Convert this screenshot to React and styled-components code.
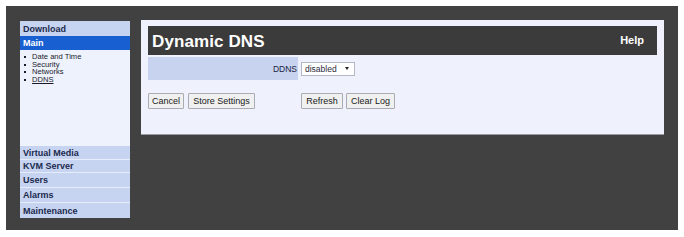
import React from "react";
import styled, { createGlobalStyle } from "styled-components";

const Global = createGlobalStyle`
  html, body { margin: 0; padding: 0; background: #ffffff; }
  body { font-family: "Liberation Sans", Arial, sans-serif; }
`;

const Frame = styled.div`
  margin: 6px 0 0 6px;
  width: 672px;
  height: 224px;
  background: #414141;
  box-sizing: border-box;
  padding: 14px 0 0 14px;
  display: flex;
  align-items: flex-start;
  gap: 11px;
`;

const Sidebar = styled.nav`
  margin-top: 1px;
  width: 110px;
  height: 197px;
  background: #eef2fd;
  display: flex;
  flex-direction: column;
`;

const NavHead = styled.div`
  height: ${(p) => p.h}px;
  box-sizing: border-box;
  padding-left: 3px;
  display: flex;
  align-items: center;
  font-size: 9px;
  font-weight: bold;
  background: ${(p) => (p.active ? "#1860d2" : "#c6d3f1")};
  color: ${(p) => (p.active ? "#ffffff" : "#1c2a4e")};
  border-bottom: ${(p) => (p.sep ? "1px solid #e6ecfa" : "none")};
`;

const SubList = styled.ul`
  list-style: none;
  margin: 0;
  padding: 3px 0 0 4px;
  flex: 1;
`;

const SubItem = styled.li`
  position: relative;
  padding-left: 8px;
  font-size: 7.6px;
  line-height: 7.6px;
  height: 7.5px;
  color: #1a1a2a;
  text-decoration: ${(p) => (p.current ? "underline" : "none")};
  &::before {
    content: "";
    position: absolute;
    left: 0;
    top: 3px;
    width: 2px;
    height: 2px;
    background: #1a1a2a;
  }
`;

const Panel = styled.main`
  width: 523px;
  height: 115px;
  box-sizing: border-box;
  background: #eff2fc;
  border-bottom: 1px solid #9a9aa4;
  padding: 6px 7px 0 7px;
`;

const Header = styled.div`
  height: 29px;
  background: #3b3b3b;
  display: flex;
  align-items: center;
  justify-content: space-between;
  padding: 0 13px 0 4px;
  color: #ffffff;
`;

const Title = styled.h1`
  margin: 2px 0 0 0;
  font-size: 17px;
  font-weight: bold;
  letter-spacing: 0.1px;
`;

const Help = styled.span`
  font-size: 11px;
  font-weight: bold;
  margin-top: -2px;
`;

const Row = styled.div`
  display: flex;
  margin-top: ${(p) => p.mt}px;
  height: ${(p) => p.h}px;
`;

const LabelCell = styled.div`
  width: 150px;
  box-sizing: border-box;
  padding-right: 1px;
  background: ${(p) => (p.shaded ? "#c7d3ef" : "transparent")};
  display: flex;
  align-items: center;
  justify-content: ${(p) => (p.shaded ? "flex-end" : "flex-start")};
  gap: 4px;
  font-size: 8.5px;
  color: #1c2440;
`;

const ValueCell = styled.div`
  flex: 1;
  display: flex;
  align-items: center;
  gap: 3px;
  padding-left: 3px;
`;

const Select = styled.div`
  width: 54px;
  height: 14px;
  box-sizing: border-box;
  background: #ffffff;
  border: 1px solid #b4b8c4;
  display: flex;
  align-items: center;
  justify-content: space-between;
  padding: 0 5px 0 3px;
  font-size: 8.5px;
  color: #2a2a3a;
`;

const Caret = styled.span`
  width: 0;
  height: 0;
  border-left: 2.5px solid transparent;
  border-right: 2.5px solid transparent;
  border-top: 3px solid #222;
`;

const Button = styled.button`
  height: 16px;
  width: ${(p) => p.w}px;
  box-sizing: border-box;
  padding: 0;
  background: #f0f0f0;
  border: 1px solid #a9abb2;
  border-radius: 1px;
  font-family: "Liberation Sans", Arial, sans-serif;
  font-size: 9px;
  color: #202020;
`;

const subItems = ["Date and Time", "Security", "Networks", "DDNS"];
const lowerNav = [
  ["Virtual Media", 14],
  ["KVM Server", 13],
  ["Users", 15],
  ["Alarms", 15],
  ["Maintenance", 15],
];

export default function App() {
  return (
    <>
      <Global />
      <Frame>
        <Sidebar>
          <NavHead h={15}>Download</NavHead>
          <NavHead h={14} active>
            Main
          </NavHead>
          <SubList>
            {subItems.map((s) => (
              <SubItem key={s} current={s === "DDNS"}>
                {s}
              </SubItem>
            ))}
          </SubList>
          {lowerNav.map(([name, h], i) => (
            <NavHead key={name} h={h} sep={i < lowerNav.length - 1}>
              {name}
            </NavHead>
          ))}
        </Sidebar>
        <Panel>
          <Header>
            <Title>Dynamic DNS</Title>
            <Help>Help</Help>
          </Header>
          <Row mt={2} h={23}>
            <LabelCell shaded>DDNS</LabelCell>
            <ValueCell>
              <Select>
                <span>disabled</span>
                <Caret />
              </Select>
            </ValueCell>
          </Row>
          <Row mt={13} h={16}>
            <LabelCell>
              <Button w={36}>Cancel</Button>
              <Button w={67}>Store Settings</Button>
            </LabelCell>
            <ValueCell>
              <Button w={42}>Refresh</Button>
              <Button w={49}>Clear Log</Button>
            </ValueCell>
          </Row>
        </Panel>
      </Frame>
    </>
  );
}
